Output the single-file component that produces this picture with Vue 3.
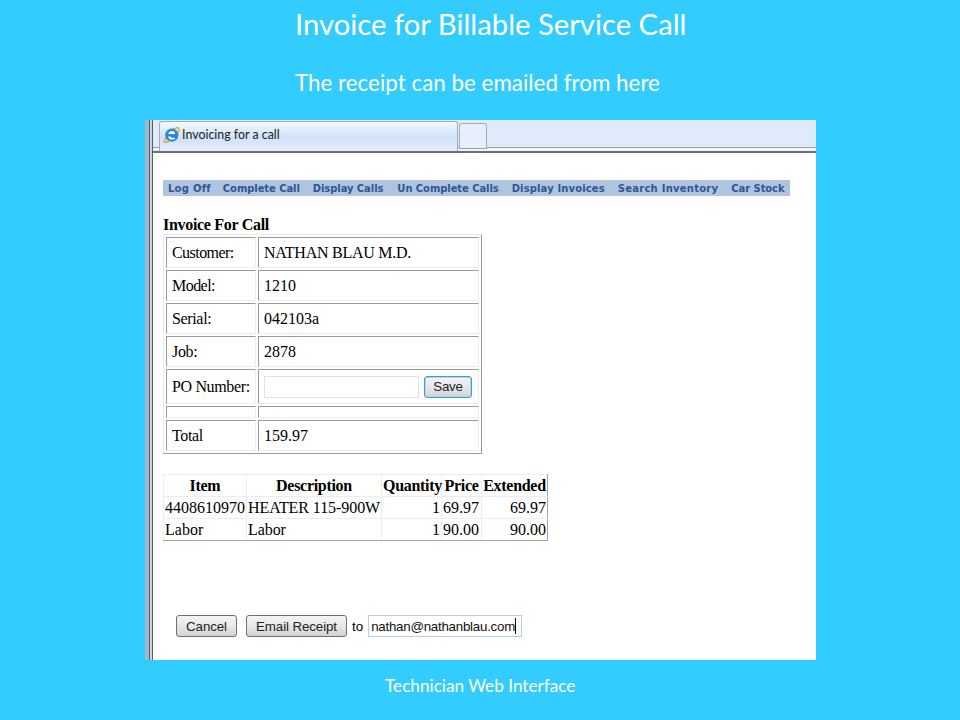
<script setup>
const navItems = ['Log Off', 'Complete Call', 'Display Calls', 'Un Complete Calls', 'Display Invoices', 'Search Inventory', 'Car Stock']
const details = [
  { label: 'Customer:', value: 'NATHAN BLAU M.D.' },
  { label: 'Model:', value: '1210' },
  { label: 'Serial:', value: '042103a' },
  { label: 'Job:', value: '2878' },
]
const lines = [
  { item: '4408610970', desc: 'HEATER 115-900W', qty: '1', price: '69.97', ext: '69.97' },
  { item: 'Labor', desc: 'Labor', qty: '1', price: '90.00', ext: '90.00' },
]
</script>

<template>
  <div class="slide">
    <h1 class="title">Invoice for Billable Service Call</h1>
    <p class="subtitle">The receipt can be emailed from here</p>

    <div class="window">
      <div class="rail">
        <span class="rail-a"></span>
        <span class="rail-b"></span>
        <span class="rail-c"></span>
        <span class="rail-d"></span>
      </div>
      <div class="browser">
        <div class="tabbar">
          <div class="tab">
            <svg class="ie" viewBox="0 0 18 18" width="17" height="17">
              <path d="M1.5 15.5C4.5 8 10 3 15.5 1.5c2 .6 1.6 3.4.2 6" fill="none" stroke="#eaa42a" stroke-width="1.5" />
              <circle cx="9.3" cy="9.6" r="7" fill="#2b8ad8" />
              <path d="M5.6 8.4c.4-2 1.9-3.2 3.8-3.2 2 0 3.4 1.2 3.6 3.2zM5.5 11c.5 2.2 2 3.4 4 3.4 1.5 0 2.7-.6 3.5-1.8l-3.4-.2c-.7.3-1.3 0-1.6-1.4z" fill="#fff" />
              <path d="M1.4 15.2c-.9 2.3 1.6 2.8 5.2.9" fill="none" stroke="#eaa42a" stroke-width="1.4" />
            </svg>
            <span>Invoicing for a call</span>
          </div>
          <div class="newtab"></div>
        </div>

        <div class="content">
          <nav class="nav">
            <a v-for="item in navItems" :key="item" class="nav-link">{{ item }}</a>
          </nav>

          <h2 class="heading">Invoice For Call</h2>
          <table class="details">
            <tbody>
              <tr v-for="row in details" :key="row.label">
                <td class="label">{{ row.label }}</td>
                <td class="value">{{ row.value }}</td>
              </tr>
              <tr class="po-row">
                <td class="label">PO Number:</td>
                <td class="value">
                  <div class="po-field">
                    <input class="po-input" type="text" />
                    <button class="btn save" type="button">Save</button>
                  </div>
                </td>
              </tr>
              <tr class="empty-row">
                <td class="label"></td>
                <td class="value"></td>
              </tr>
              <tr class="total-row">
                <td class="label">Total</td>
                <td class="value">159.97</td>
              </tr>
            </tbody>
          </table>

          <table class="lines">
            <thead>
              <tr>
                <th class="c-item">Item</th>
                <th class="c-desc">Description</th>
                <th class="c-qty">Quantity</th>
                <th class="c-price">Price</th>
                <th class="c-ext">Extended</th>
              </tr>
            </thead>
            <tbody>
              <tr v-for="line in lines" :key="line.item">
                <td>{{ line.item }}</td>
                <td>{{ line.desc }}</td>
                <td class="right">{{ line.qty }}</td>
                <td class="right">{{ line.price }}</td>
                <td class="right">{{ line.ext }}</td>
              </tr>
            </tbody>
          </table>

          <div class="actions">
            <button class="btn cancel" type="button">Cancel</button>
            <button class="btn email" type="button">Email Receipt</button>
            <span class="to">to</span>
            <div class="email-box">nathan@nathanblau.com<span class="caret"></span></div>
          </div>
        </div>
      </div>
    </div>

    <p class="footer">Technician Web Interface</p>
  </div>
</template>

<style scoped>
.slide {
  width: 960px;
  height: 720px;
  background: #33ccff;
  overflow: hidden;
  display: flex;
  flex-direction: column;
  font-family: "Liberation Serif", serif;
  color: #000;
}
.title {
  margin: 6px 0 0 295px;
  font: 400 29.25px/36px Lato, "Noto Sans", sans-serif;
  color: #fff;
  white-space: nowrap;
}
.subtitle {
  margin: 27px 0 0 295px;
  font: 400 22.4px/28px Lato, "Noto Sans", sans-serif;
  color: #fff;
  white-space: nowrap;
}
.window {
  margin: 23px 0 0 145px;
  width: 671px;
  height: 540px;
  display: flex;
  background: #fff;
}
.rail {
  width: 8px;
  flex: none;
  display: flex;
}
.rail-a { width: 4px; background: #a6b6c9; }
.rail-b { width: 1px; background: #5d6670; }
.rail-c { width: 2px; background: #c9d3df; }
.rail-d { width: 1px; background: #5a5f66; }
.browser {
  flex: 1;
  min-width: 0;
  display: flex;
  flex-direction: column;
}
.tabbar {
  height: 33px;
  box-sizing: border-box;
  background: linear-gradient(#dfeafa 0 27px, #9aa0a8 27px 28px, #eef4fb 28px);
  border-bottom: 2px solid #6f6f6f;
  display: flex;
  align-items: flex-start;
  padding: 1px 0 0 6px;
}
.tab {
  width: 299px;
  height: 30px;
  box-sizing: border-box;
  border: 1px solid #a3adb8;
  border-bottom: none;
  border-radius: 3px 3px 0 0;
  background: linear-gradient(#f3f8fe, #cfe2f8 55%, #e4eefb);
  display: flex;
  align-items: center;
  gap: 2px;
  padding: 0 0 4px 3px;
  font: 400 12.4px Lato, "Noto Sans", sans-serif;
  color: #222;
}
.ie { flex: none; }
.newtab {
  width: 28px;
  height: 26px;
  margin-top: 2px;
  box-sizing: border-box;
  margin-left: 1px;
  border: 1px solid #a3adb8;
  border-bottom: 1px solid #9aa0a8;
  border-radius: 3px 3px 0 0;
  background: #e6effb;
}
.content {
  flex: 1;
  padding: 27px 0 0 10px;
  display: flex;
  flex-direction: column;
  align-items: flex-start;
}
.nav {
  width: 627px;
  height: 16px;
  box-sizing: border-box;
  background: #b0c4de;
  display: flex;
  align-items: center;
  gap: 13px;
  padding-left: 5px;
  font: 700 10px "DejaVu Sans", Verdana, sans-serif;
  color: #2f5597;
  white-space: nowrap;
}
.nav-link { display: block; letter-spacing: -0.08px; }
.nav-link:nth-child(1) { letter-spacing: 0.25px; margin-right: -1px; }
.nav-link:nth-child(4) { margin-left: 1px; }
.nav-link:nth-child(5) { letter-spacing: 0.13px; }
.nav-link:nth-child(6) { letter-spacing: 0.25px; }
.heading {
  margin: 20px 0 0;
  font: 700 16px/18px "Liberation Serif", serif;
  letter-spacing: -0.3px;
}
.details {
  width: 319px;
  table-layout: fixed;
  border-collapse: separate;
  border-spacing: 2px;
  border: 1px solid;
  border-color: #e8e8e8 #9a9a9a #9a9a9a #e8e8e8;
  font-size: 16px;
}
.details td {
  box-sizing: border-box;
  height: 31px;
  padding: 0 5px;
  border: 1px solid;
  border-color: #9a9a9a #ececec #ececec #9a9a9a;
  white-space: nowrap;
}
.details .label { width: 90px; letter-spacing: -0.35px; }
.details tr:nth-child(-n+2) .label { letter-spacing: -0.55px; }
.details tr:first-child .value { letter-spacing: -0.25px; }
.po-row td { height: 35px; }
.empty-row td { height: 12px; padding: 0; }
.total-row td { height: 31px; }
.po-field {
  display: flex;
  align-items: center;
  gap: 5px;
}
.po-input {
  width: 155px;
  height: 22px;
  box-sizing: border-box;
  padding: 0;
  border: 1px solid #dfe3e8;
  background: #fff;
}
.btn {
  box-sizing: border-box;
  height: 22px;
  padding: 0;
  border: 1px solid #707070;
  border-radius: 3px;
  background: linear-gradient(#f4f4f4, #e8e8e8 50%, #d2d2d2);
  font: 400 13.33px "Liberation Sans", Arial, sans-serif;
  letter-spacing: -0.1px;
  color: #222;
}
.save {
  width: 48px;
  letter-spacing: -0.2px;
  border-color: #3c9fc9;
  box-shadow: inset 0 0 0 1px #a9dcf0;
}
.lines {
  margin-top: 20px;
  width: 384px;
  table-layout: fixed;
  border-collapse: collapse;
  font-size: 16px;
}
.lines th,
.lines td {
  box-sizing: border-box;
  height: 22px;
  padding: 0 1px;
  border: 1px solid #e9eef2;
  white-space: nowrap;
  text-align: left;
}
.lines th { text-align: center; letter-spacing: -0.3px; }
.lines td:nth-child(2) { letter-spacing: -0.07px; }
.lines th:last-child,
.lines td:last-child { border-right-color: #a5a5a5; }
.lines tbody tr:last-child td { border-bottom-color: #a5a5a5; }
.lines .right { text-align: right; }
.lines td:nth-child(4) { text-align: left; }
.c-item { width: 83px; }
.c-desc { width: 135px; }
.c-qty { width: 60px; }
.c-price { width: 40px; }
.c-ext { width: 66px; }
.actions {
  margin: 74px 0 0 13px;
  display: flex;
  align-items: center;
}
.cancel { width: 61px; }
.email { width: 101px; margin-left: 9px; }
.to {
  margin-left: 5px;
  font: 400 13.33px "Liberation Sans", Arial, sans-serif;
}
.email-box {
  margin-left: 5px;
  width: 154px;
  height: 22px;
  box-sizing: border-box;
  border: 1px solid #b5cfe4;
  padding-left: 2px;
  display: flex;
  align-items: center;
  font: 400 13.33px "Liberation Sans", Arial, sans-serif;
  letter-spacing: -0.25px;
  color: #111;
}
.caret {
  width: 1px;
  height: 16px;
  background: #000;
}
.footer {
  margin: 16px 0 0 385px;
  font: 400 17.2px/20px Lato, "Noto Sans", sans-serif;
  color: #fff;
  white-space: nowrap;
}
</style>
